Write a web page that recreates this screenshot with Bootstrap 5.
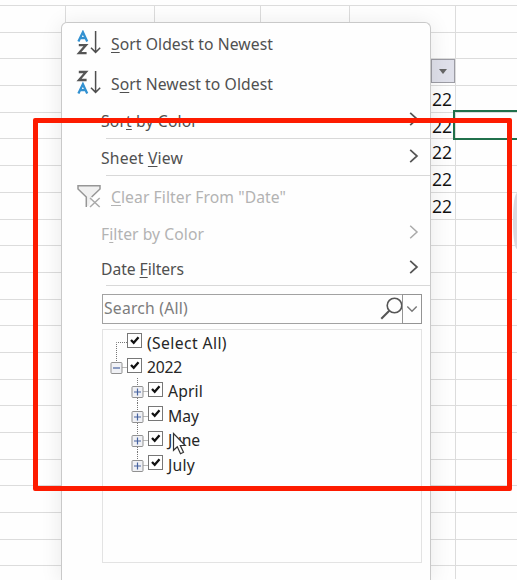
<!DOCTYPE html>
<html lang="en">
<head>
<meta charset="utf-8">
<title>Date filter menu</title>
<meta name="viewport" content="width=device-width, initial-scale=1">
<link href="https://cdn.jsdelivr.net/npm/bootstrap@5.3.0/dist/css/bootstrap.min.css" rel="stylesheet">
<style>
body{width:517px;height:580px;overflow:hidden;background:#fefefe;font-family:"Noto Sans","Open Sans",sans-serif;font-size:15.7px;color:#505050}
.sheet{width:517px;height:580px;padding-top:5px}
.sheet-row{height:26.7px;border-top:1px solid #dcdcdc}
.sheet-row:last-child{height:14px}
.sheet-col{border-right:1px solid #dcdcdc;flex:none;height:100%}
.w1{width:66px}.w2{width:89px}.w3{width:106px}.w4{width:89px}.w5{width:106px}
.cell-text{font:17.6px/26px "Open Sans",sans-serif;color:#111;text-align:right;padding-right:3px}
.drop-btn{width:24px;height:24px;border:1.5px solid #9c9ca4;background:#dfe0ea}
.active-cell{left:453px;top:110px;width:64px;height:30px;border:2px solid #20704b;border-right:0}
.filter-menu{left:61px;top:22px;width:370px;height:558px;background:#fefefe;border:1px solid #c9c9c9;border-bottom:0;border-radius:6px 6px 0 0;box-shadow:0 2px 22px rgba(0,0,0,.09)}
.entry{padding-left:39px;white-space:nowrap;line-height:22px}
.entry.iconic{padding-left:14px}
.entry svg.lead-ic{width:26px;height:26px;margin-right:9px;flex:none}
.entry u{text-underline-offset:2px;text-decoration-thickness:1px}
.entry span{padding-top:1px}
.h40{height:40px}.h36{height:36px}.h35{height:35px}.h34{height:34px}
.off{color:#b3b3b3}
.chev{width:10px;height:16px;margin-left:auto;margin-right:11px;margin-top:-3px}
.rule{height:1px;background:#d8d8d8;margin-left:44px}
.searchbox{margin:8px 8px 0 40px;height:30px;border:1px solid #a2a2a2;color:#7c7c7c;padding-left:1px}
.search-drop{width:20px;height:30px;border:1.5px solid #949494;margin:-1px}
.tree{margin:5px 8px 0 40px;height:234px;border:1px solid #e3e3e3;color:#262626}
.tree-row{height:24.4px;line-height:24px;white-space:nowrap}
.label-u{padding-top:1px}
.tick{width:15px;height:15px;flex:none;margin-right:5px;margin-top:-3px}
.frame-red{left:33px;top:118px;width:479px;height:373px;border:5px solid #fd1b00;border-radius:2px}
.pointer{left:172px;top:432px}
.handle-edge{left:513px;top:193px;width:4px;height:56px;border-radius:4px 0 0 4px / 26px 0 0 26px;background:#d9d9df}
</style>
<script src="https://cdn.jsdelivr.net/npm/bootstrap@5.3.0/dist/js/bootstrap.bundle.min.js"></script>
</head>
<body class="position-relative">
<div class="sheet overflow-hidden" id="sheet"></div>
<div class="active-cell position-absolute"></div>
<div class="handle-edge position-absolute"></div>

<div class="filter-menu position-absolute">
  <div class="entry iconic h40 d-flex align-items-center">
    <svg class="lead-ic" viewBox="0 0 26 26" fill="none" stroke-width="2.3"><path stroke="#3291d1" d="M2.4 11.5 6.9 2.2 11.2 11.5M4 8.2h5.8"/><path stroke="#555" d="M2.8 15.1h7.2l-7 8h7.6"/><path stroke="#4e4e4e" stroke-width="1.5" d="M19.6 1v21.3M15 17.8l4.6 4.6 4.6-4.6"/></svg>
    <span data-w="162"><u>S</u>ort Oldest to Newest</span>
  </div>
  <div class="entry iconic h40 d-flex align-items-center">
    <svg class="lead-ic" viewBox="0 0 26 26" fill="none" stroke-width="2.3"><path stroke="#555" d="M2.8 2h7.2l-7 8h7.6"/><path stroke="#3291d1" d="M2.4 23.5 6.9 14.2 11.2 23.5M4 20.2h5.8"/><path stroke="#4e4e4e" stroke-width="1.5" d="M19.6 1v21.3M15 17.8l4.6 4.6 4.6-4.6"/></svg>
    <span data-w="162">S<u>o</u>rt Newest to Oldest</span>
  </div>
  <div class="entry h35 d-flex align-items-center"><span data-w="97">Sor<u>t</u> by Color</span>
    <svg class="chev" viewBox="0 0 10 16" fill="none" stroke="#555" stroke-width="1.7"><path d="M1.2 1.8 8 8l-6.8 6.2"/></svg></div>
  <div class="rule"></div>
  <div class="entry h36 d-flex align-items-center"><span data-w="82">Sheet <u>V</u>iew</span>
    <svg class="chev" viewBox="0 0 10 16" fill="none" stroke="#555" stroke-width="1.7"><path d="M1.2 1.8 8 8l-6.8 6.2"/></svg></div>
  <div class="rule"></div>
  <div class="entry iconic off h40 d-flex align-items-center">
    <svg class="lead-ic" viewBox="0 0 26 26" fill="none" stroke="#969696" stroke-width="1.5"><path fill="#f0f0f0" stroke="none" d="M2 3h22v3l-8 8-3 9h-3v-9L2 6z"/><path d="M10.3 24V14L2 6V2.7h22V6l-8.4 8"/><path stroke="#aaa" d="m14 15 9.7 9M23.7 15 14 24"/></svg>
    <span data-w="175"><u>C</u>lear Filter From "Date"</span>
  </div>
  <div class="entry off h35 d-flex align-items-center"><span data-w="103">F<u>i</u>lter by Color</span>
    <svg class="chev" viewBox="0 0 10 16" fill="none" stroke="#aaa" stroke-width="1.5"><path d="M1.2 1.8 8 8l-6.8 6.2"/></svg></div>
  <div class="entry h34 d-flex align-items-center"><span data-w="83">Date <u>F</u>ilters</span>
    <svg class="chev" viewBox="0 0 10 16" fill="none" stroke="#555" stroke-width="1.7"><path d="M1.2 1.8 8 8l-6.8 6.2"/></svg></div>
  <div class="rule"></div>
  <div class="searchbox d-flex align-items-center">
    <span data-w="84">Search (All)</span>
    <svg class="ms-auto" width="23" height="26" viewBox="0 0 23 26" fill="none" stroke="#555"><circle cx="14.5" cy="9.5" r="7.3" stroke-width="1.6"/><path stroke-width="2" d="m9.3 14.7-8 8"/></svg>
    <span class="search-drop d-flex align-items-center justify-content-center"><svg width="12" height="8" viewBox="0 0 12 8" fill="none" stroke="#777" stroke-width="1.4"><path d="m1.3 1.5 4.7 4.7 4.7-4.7"/></svg></span>
  </div>
  <div class="tree" id="tree"></div>
</div>

<div class="frame-red position-absolute"></div>
<svg class="pointer position-absolute" width="15" height="24" viewBox="0 0 15 24"><path fill="#fff" stroke="#333" stroke-width="1.2" d="M1.5 1.5v16.8l3.8-3.6 3.2 7 3-1.4-3.2-6.8h5z"/></svg>

<script>
const sheet = document.getElementById('sheet');
for (let r = 0; r < 22; r++) {
  const inner = r >= 3 && r <= 7 ? '22' : '';
  sheet.insertAdjacentHTML('beforeend',
    '<div class="sheet-row d-flex">' +
    '<div class="sheet-col w1"></div><div class="sheet-col w2"></div><div class="sheet-col w3"></div><div class="sheet-col w4"></div>' +
    '<div class="sheet-col w5 cell-text">' + inner + '</div></div>');
}
/* Filter button sits in the header cell above the dates */
const header = sheet.children[2].lastElementChild;
header.classList.add('pe-0');
header.innerHTML = '<span class="drop-btn d-flex align-items-center justify-content-center ms-auto"><svg width="8" height="5"><path d="M0 0h8L4 5z" fill="#666"/></svg></span>';

const rows = [['(Select All)', 0, '', 80], ['2022', 0, '-', 35], ['April', 1, '+', 35], ['May', 1, '+', 31], ['June', 1, '+', 32], ['July', 1, '+', 27]];
const tree = document.getElementById('tree');
rows.forEach(([name, level, sign, w], i) => {
  const cx = level ? 34.5 : 13.5, width = level ? 45 : 24;
  let art = '';
  const dots = d => '<path d="' + d + '" stroke="#777" stroke-dasharray="1 1" fill="none"/>';
  if (i === 0) art = dots('M13.5 25V12.5H24');
  else {
    art = dots('M' + (cx + 6) + ' 13.5H' + width);
    if (i === 1) art += dots('M13.5 0V7');
    if (level) art += dots('M34.5 0V' + (i === 5 ? 7 : 25));
    art += '<rect x="' + (cx - 5.5) + '" y="8.5" width="11" height="11" rx="1" fill="#f0f1f5" stroke="#919191"/>' +
      '<path d="M' + (cx - 3.5) + ' 14h7' + (sign === '+' ? 'M' + cx + ' 10.5v7' : '') + '" stroke="#47639f" stroke-width="1.2"/>';
  }
  tree.insertAdjacentHTML('beforeend',
    '<div class="tree-row d-flex align-items-center"><svg class="flex-shrink-0" width="' + width + '" height="25">' + art + '</svg>' +
    '<svg class="tick" viewBox="0 0 15 15" fill="none"><rect x=".5" y=".5" width="14" height="14" fill="#fff" stroke="#777"/><path d="m4 7 2.7 2.8 4.8-5.6" stroke="#111" stroke-width="2.3"/></svg>' +
    '<span class="label-u" data-w="' + w + '">' + name + '</span></div>');
});
document.querySelectorAll('[data-w]').forEach(el => {
  const gap = (el.dataset.w - el.getBoundingClientRect().width) / el.textContent.length;
  el.style.letterSpacing = gap.toFixed(3) + 'px';
});
</script>
</body>
</html>
